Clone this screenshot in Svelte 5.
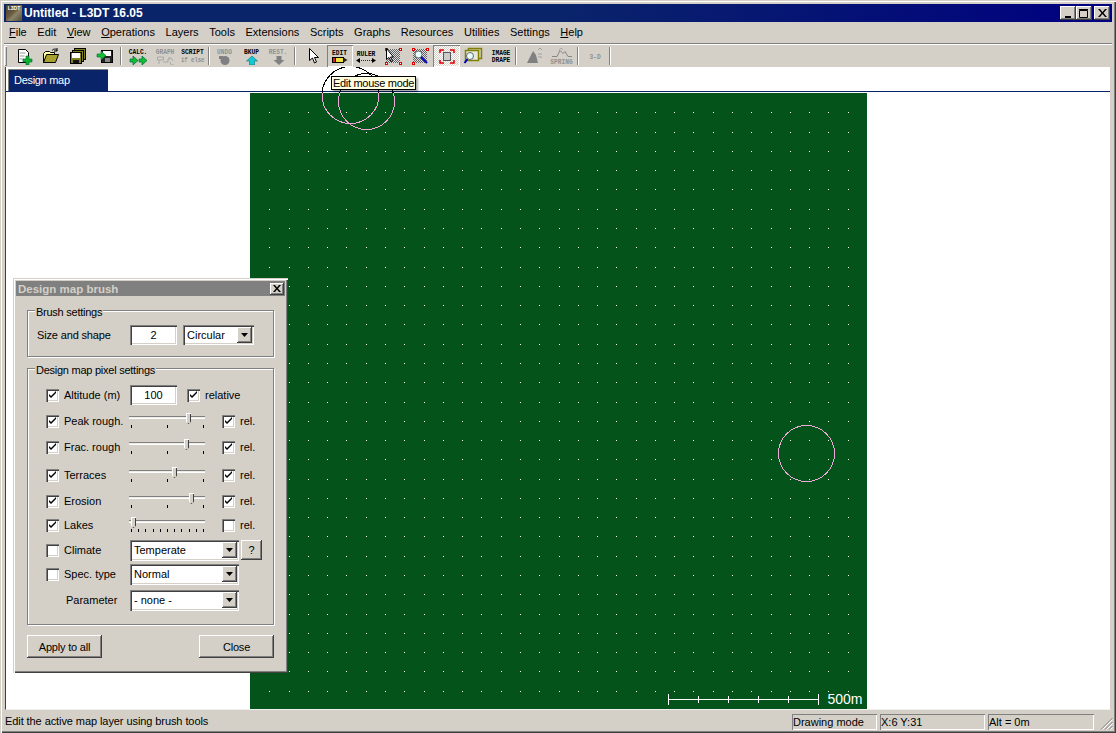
<script>
  const menus = [
    { u: 'F', rest: 'ile' }, { u: '', rest: 'Edit' }, { u: 'V', rest: 'iew' },
    { u: 'O', rest: 'perations' }, { u: '', rest: 'Layers' }, { u: '', rest: 'Tools' },
    { u: '', rest: 'Extensions' }, { u: '', rest: 'Scripts' }, { u: '', rest: 'Graphs' },
    { u: '', rest: 'Resources' }, { u: '', rest: 'Utilities' }, { u: '', rest: 'Settings' },
    { u: 'H', rest: 'elp' }
  ];

  // brush rows, gap = space above the row
  const sliders = [
    { label: 'Peak rough.', on: true, pos: 57, ticks: 3, rel: true, gap: 4 },
    { label: 'Frac. rough', on: true, pos: 55, ticks: 3, rel: true, gap: 4 },
    { label: 'Terraces', on: true, pos: 43, ticks: 3, rel: true, gap: 6 },
    { label: 'Erosion', on: true, pos: 60, ticks: 3, rel: true, gap: 4 },
    { label: 'Lakes', on: true, pos: 2, ticks: 11, rel: false, gap: 2 }
  ];

  const cell = 617 / 32;
  const dots = [];
  for (let i = 1; i < 32; i++) dots.push(Math.round(i * cell));

  const scaleTicks = [30, 60, 90, 120];
</script>

{#snippet check(on)}
  <span class="check sunken">
    {#if on}
      <svg width="9" height="9" viewBox="0 0 9 9"><path d="M1 3v2l2 2 5-5V0L3 5z" fill="#000" /></svg>
    {/if}
  </span>
{/snippet}

{#snippet combo(text, cls)}
  <div class="combo sunken {cls}">
    <span class="combo-text">{text}</span>
    <span class="combo-btn raised"><svg width="7" height="4" viewBox="0 0 7 4"><path d="M0 0h7L3.500 4z" fill="#000" /></svg></span>
  </div>
{/snippet}

{#snippet tbtext(a, b, grey)}
  <span class="tb-text" class:grey><span>{a}</span>{#if b}<span>{b}</span>{/if}</span>
{/snippet}

<div class="window">
  <div class="titlebar">
    <div class="app-icon"><span>L3DT</span></div>
    <div class="title-text">Untitled - L3DT 16.05</div>
    <div class="caption">
      <button class="cap raised" aria-label="Minimize"><svg width="9" height="9"><rect x="1" y="7" width="6" height="2" fill="#000" /></svg></button>
      <button class="cap raised" aria-label="Maximize"><svg width="10" height="9"><path d="M0.500 1.500h8v7h-8zM0 0.500h9" fill="none" stroke="#000" /></svg></button>
      <button class="cap raised close" aria-label="Close"><svg width="9" height="8"><path d="M0 0l2 0 2.500 3L7 0h2L5.500 4 9 8H7L4.500 5 2 8H0l3.500-4z" fill="#000" /></svg></button>
    </div>
  </div>

  <div class="menubar">
    {#each menus as m}
      <span class="menu"><u>{m.u}</u>{m.rest}</span>
    {/each}
  </div>

  <div class="toolbar">
    <div class="handle"></div>
    <div class="tb">
      <svg width="18" height="18" viewBox="0 0 18 18"><path d="M3.500 2.500h7l3 3v10h-10z" fill="#fff" stroke="#000" /><path d="M4.500 6h6M4.500 9h5M4.500 12h4" stroke="#999" /><path d="M11 9h3v3h3v3h-3v3h-3v-3H8v-3h3z" fill="#10b030" stroke="#063" stroke-width=".6" /></svg>
    </div>
    <div class="tb">
      <svg width="20" height="18" viewBox="0 0 20 18"><path d="M2.500 15.500v-9l2-2h4l1 1h4v2h-7l-4 8z" fill="#ffffa0" stroke="#000" /><path d="M2.500 15.500l3-8h12l-3 8z" fill="#a8a030" stroke="#000" /><path d="M11 3.500c2-2 4-2 5 0M16 1v3h-3" fill="none" stroke="#000" /></svg>
    </div>
    <div class="tb">
      <svg width="18" height="18" viewBox="0 0 18 18"><rect x="5.500" y="1.500" width="11" height="11" fill="#808020" stroke="#000" /><rect x="3.500" y="3.500" width="11" height="11" fill="#808020" stroke="#000" /><rect x="1.500" y="5.500" width="11" height="11" fill="#808020" stroke="#000" /><rect x="3" y="6" width="8" height="5" fill="#fff" /><rect x="4" y="13" width="6" height="3" fill="#111" /></svg>
    </div>
    <div class="tb">
      <svg width="18" height="18" viewBox="0 0 18 18"><rect x="5.500" y="3.500" width="11" height="12" fill="#222" stroke="#000" /><rect x="7" y="4" width="8" height="5" fill="#fff" /><rect x="9" y="11" width="5" height="4" fill="#888" /><path d="M1 7h4V4l5 4.500L5 13v-3H1z" fill="#10c030" stroke="#063" stroke-width=".6" /></svg>
    </div>
    <div class="sep s1"></div>
    <div class="tb col">
      {@render tbtext('CALC.')}
      <svg width="20" height="9" viewBox="0 0 20 9"><path d="M1 3h3V0l5 4.500L4 9V6H1zM10 3h3V0l5 4.500L13 9V6h-3z" fill="#10c030" stroke="#064" stroke-width=".7" /></svg>
    </div>
    <div class="tb col">
      {@render tbtext('GRAPH', '', true)}
      <svg width="20" height="9" viewBox="0 0 20 9"><path d="M1.500 1h6v3h-6zM3 4v4M7 6h5v-3h2M12 2h3l2 3M14 6l1 3h3" fill="none" stroke="#a8a8a8" /></svg>
    </div>
    <div class="tb col">
      {@render tbtext('SCRIPT')}
      <span class="ifelse">if else</span>
    </div>
    <div class="sep s2"></div>
    <div class="tb col">
      {@render tbtext('UNDO', '', true)}
      <svg width="12" height="9" viewBox="0 0 12 9"><circle cx="6" cy="4.500" r="4.500" fill="#808080" /><path d="M0 0h4v3H0z" fill="#808080" /></svg>
    </div>
    <div class="tb col">
      {@render tbtext('BKUP')}
      <svg width="12" height="9" viewBox="0 0 12 9"><path d="M6 0l5.500 5H8.500v4h-5V5H.5z" fill="#10c8d8" stroke="#066" stroke-width=".5" /></svg>
    </div>
    <div class="tb col">
      {@render tbtext('REST.', '', true)}
      <svg width="12" height="9" viewBox="0 0 12 9"><path d="M6 9L.5 4h3V0h5v4h3z" fill="#808080" /></svg>
    </div>
    <div class="sep s3"></div>
    <div class="tb">
      <svg width="14" height="18" viewBox="0 0 14 18"><path d="M2.500 1.500v12l3-2.500 2 5 2-1-2-4.500h4z" fill="#fff" stroke="#000" /></svg>
    </div>
    <div class="tb col pressed">
      {@render tbtext('EDIT')}
      <svg width="16" height="7" viewBox="0 0 16 7"><rect x="0.500" y="0.500" width="3" height="5" fill="#e02020" stroke="#000" /><rect x="3.500" y="0.500" width="8" height="5" fill="#f0e040" stroke="#000" /><path d="M11.500 .5l4 2.500-4 2.500z" fill="#222" /></svg>
    </div>
    <div class="tb col narrow">
      {@render tbtext('RULER')}
      <svg width="20" height="5" viewBox="0 0 20 5"><path d="M3 2.500h14" stroke="#800" stroke-dasharray="1 1" /><path d="M0 2.500L4 0v5zM20 2.500L16 0v5z" fill="#000" /></svg>
    </div>
    <div class="tb">
      <svg width="18" height="18" viewBox="0 0 18 18" shape-rendering="crispEdges">
        <defs><pattern id="dither" width="2" height="2" patternUnits="userSpaceOnUse"><rect width="2" height="2" fill="#e0e0e0" /><rect width="1" height="1" fill="#606060" /><rect x="1" y="1" width="1" height="1" fill="#606060" /></pattern></defs>
        <rect x="2" y="2" width="14" height="14" fill="url(#dither)" />
        <path d="M1 1h2v2H1zM15 1h2v2h-2zM1 15h2v2H1zM15 15h2v2h-2z" fill="#fff" stroke="#e00000" />
        <path d="M2.500 1.500v11l2.500-2 2 4 1.500-.7-2-3.800h3z" fill="#fff" stroke="#000" shape-rendering="auto" />
      </svg>
    </div>
    <div class="tb">
      <svg width="18" height="18" viewBox="0 0 18 18" shape-rendering="crispEdges">
        <rect x="2" y="2" width="14" height="14" fill="url(#dither)" />
        <path d="M1 1h2v2H1zM15 1h2v2h-2zM1 15h2v2H1z" fill="#fff" stroke="#e00000" />
        <circle cx="7.500" cy="7.500" r="3.500" fill="#e8ffff" stroke="#666" shape-rendering="auto" />
        <path d="M10 10l6 6" stroke="#0000c0" stroke-width="2" shape-rendering="auto" />
      </svg>
    </div>
    <div class="tb checked">
      <svg width="16" height="15" viewBox="0 0 16 15"><path d="M1 4V1h4M11 1h4v3M15 11v3h-4M5 14H1v-3" fill="none" stroke="#e00000" stroke-width="1.500" /><rect x="4.500" y="3.500" width="7" height="8" fill="#ccc" stroke="#555" /></svg>
    </div>
    <div class="tb narrow">
      <svg width="20" height="18" viewBox="0 0 20 18"><rect x="5.500" y="1.500" width="13" height="10" fill="#d4d0c8" stroke="#808000" stroke-width="1.500" /><rect x="2.500" y="3.500" width="13" height="10" fill="#e8e8e0" stroke="#808000" stroke-width="1.500" /><circle cx="7" cy="9" r="3.500" fill="#e8ffff" stroke="#666" /><path d="M4.500 12l-3 4" stroke="#0000c0" stroke-width="2" /></svg>
    </div>
    <div class="tb col drape">
      {@render tbtext('IMAGE', 'DRAPE')}
    </div>
    <div class="sep s4"></div>
    <div class="tb">
      <svg width="18" height="18" viewBox="0 0 18 18"><path d="M1 16L7 4l3 4 2 8z" fill="#808080" /><path d="M12 3l2-2 2 2M12 7h4M12 10h4" fill="none" stroke="#a0a0a0" /></svg>
    </div>
    <div class="tb col">
      <svg width="22" height="9" viewBox="0 0 22 9"><path d="M1 8.500h5l3-6 3 3 2-2 3 5h4" fill="none" stroke="#888" /><path d="M8 2l2-2 2 2" fill="none" stroke="#aaa" /></svg>
      {@render tbtext('SPRING', '', true)}
    </div>
    <div class="sep s5"></div>
    <div class="tb">{@render tbtext('3-D', '', true)}</div>
    <div class="sep s6"></div>
  </div>

  <div class="client">
    <div class="tabstrip">
      <div class="tab">Design map</div>
    </div>
    <div class="canvas">
      <div class="map">
        <svg class="dots" width="617" height="617" shape-rendering="crispEdges">
          {#each dots as y}
            {#each dots as x}
              <rect {x} {y} width="1" height="1" fill="#fff" />
            {/each}
          {/each}
        </svg>
        <div class="scale">
          <svg width="153" height="11" shape-rendering="crispEdges">
            <path d="M0 5.500h151M0.500 0v11M150.500 0v11" stroke="#fff" fill="none" />
            {#each scaleTicks as t}
              <path d="M{t + 0.5} 2v7" stroke="#fff" />
            {/each}
          </svg>
          <span>500m</span>
        </div>
      </div>
    </div>
  </div>

  <div class="statusbar">
    <div class="status-msg">Edit the active map layer using brush tools</div>
    <div class="panel p1">Drawing mode</div>
    <div class="panel p2">X:6 Y:31</div>
    <div class="panel p3">Alt = 0m</div>
    <svg class="grip" width="13" height="13" viewBox="0 0 13 13"><path d="M12.500 1L1 12.500M12.500 5L5 12.500M12.500 9L9 12.500" stroke="#808080" fill="none" /><path d="M12.500 2.500L2.500 12.500M12.500 6.500L6.500 12.500M12.500 10.500L10.500 12.500" stroke="#fff" fill="none" /></svg>
  </div>

  <!-- brush cursor circles, XOR look: black on white, pink on the map -->
  <svg class="cursors" width="1116" height="733">
    <defs>
      <clipPath id="over-white"><rect x="6" y="67" width="1104" height="26" /></clipPath>
      <clipPath id="over-map"><rect x="250" y="93" width="617" height="617" /></clipPath>
    </defs>
    <g fill="none" stroke="#000" clip-path="url(#over-white)">
      <circle cx="350.500" cy="95" r="28.500" />
      <circle cx="366.500" cy="101.500" r="28" />
    </g>
    <g fill="none" stroke="#f0a8d8" clip-path="url(#over-map)">
      <circle cx="350.500" cy="95" r="28.500" />
      <circle cx="366.500" cy="101.500" r="28" />
      <circle cx="806.500" cy="453.500" r="28" />
    </g>
  </svg>

  <div class="tooltip">Edit mouse mode</div>

  <div class="dialog">
    <div class="dlg-title">
      <span>Design map brush</span>
      <button class="dlg-close raised" aria-label="Close"><svg width="8" height="7"><path d="M0 0h2l2 2.500L6 0h2L5 3.500 8 7H6L4 4.500 2 7H0l3-3.500z" fill="#000" /></svg></button>
    </div>

    <div class="group g1">
      <div class="legend">Brush settings</div>
      <div class="size-row">
        <span class="size-label">Size and shape</span>
        <div class="input sunken">2</div>
        {@render combo('Circular', 'shape')}
      </div>
    </div>

    <div class="group g2">
      <div class="legend">Design map pixel settings</div>

      <div class="row first">
        {@render check(true)}
        <span class="label">Altitude (m)</span>
        <div class="input sunken">100</div>
        <span class="alt-rel">{@render check(true)}</span>
        <span class="alt-rel-text">relative</span>
      </div>

      {#each sliders as s}
        <div class="row" style:margin-top="{s.gap}px">
          {@render check(s.on)}
          <span class="label">{s.label}</span>
          <div class="slider">
            <div class="track"></div>
            {#each Array(s.ticks) as _, i}
              <span class="tick" style:left="{2 + (72 * i) / (s.ticks - 1)}px"></span>
            {/each}
            <div class="thumb" style:left="{s.pos}px"></div>
          </div>
          {@render check(s.rel)}
          <span class="rel-text">rel.</span>
        </div>
      {/each}

      <div class="row" style:margin-top="3px">
        {@render check(false)}
        <span class="label">Climate</span>
        {@render combo('Temperate', 'wide')}
        <button class="help raised">?</button>
      </div>
      <div class="row" style:margin-top="2px">
        {@render check(false)}
        <span class="label">Spec. type</span>
        {@render combo('Normal', 'wide')}
      </div>
      <div class="row" style:margin-top="4px">
        <span class="param">Parameter</span>
        {@render combo('- none -', 'wide')}
      </div>
    </div>

    <div class="dlg-buttons">
      <button class="btn raised">Apply to all</button>
      <button class="btn raised">Close</button>
    </div>
  </div>
</div>

<style>
  :global(body) {
    background: #d4d0c8;
  }
  .window {
    position: relative;
    width: 1116px;
    height: 733px;
    box-sizing: border-box;
    display: flex;
    flex-direction: column;
    overflow: hidden;
    background: #d4d0c8;
    font-family: "Liberation Sans", Arial, sans-serif;
    font-size: 11px;
    color: #000;
    box-shadow: inset 1px 1px 0 #d4d0c8, inset 2px 2px 0 #fff, inset -1px -1px 0 #404040, inset -2px -2px 0 #808080;
  }
  .raised {
    box-shadow: inset -1px -1px 0 #404040, inset 1px 1px 0 #fff, inset -2px -2px 0 #808080;
    background: #d4d0c8;
    border: none;
    padding: 0;
    font: inherit;
    color: #000;
  }
  .sunken {
    box-sizing: border-box;
    background: #fff;
    box-shadow: inset 1px 1px 0 #808080, inset 2px 2px 0 #404040, inset -1px -1px 0 #fff, inset -2px -2px 0 #d4d0c8;
  }

  .titlebar {
    margin: 4px 4px 0;
    height: 18px;
    display: flex;
    align-items: center;
    background: linear-gradient(90deg, #0a246a, #0a246a 50%, #000080);
    flex: none;
  }
  .app-icon {
    width: 16px;
    height: 16px;
    margin-left: 2px;
    background: linear-gradient(135deg, #3c3c36, #6c5c40 45%, #8c8468 60%, #4c4c38);
    overflow: hidden;
  }
  .app-icon span {
    display: block;
    font-size: 5px;
    line-height: 6px;
    color: #fff;
    font-weight: bold;
    text-align: center;
  }
  .title-text {
    margin-left: 2px;
    font-weight: bold;
    font-size: 12px;
    color: #fff;
  }
  .caption {
    margin-left: auto;
    margin-right: 2px;
    display: flex;
  }
  .cap {
    width: 16px;
    height: 14px;
    display: flex;
    align-items: center;
    justify-content: center;
  }
  .cap.close {
    margin-left: 2px;
  }

  .menubar {
    height: 19px;
    padding-left: 9px;
    display: flex;
    align-items: center;
    gap: 10.600px;
    font-size: 11px;
    flex: none;
    margin-top: 1px;
  }
  .menu {
    position: relative;
    top: -1px;
  }
  .menu u {
    text-decoration: underline;
  }

  .toolbar {
    flex: none;
    height: 24px;
    box-sizing: border-box;
    margin: 1px 4px 0;
    padding-top: 1px;
    border-top: 1px solid #808080;
    box-shadow: inset 0 1px 0 #fff;
    display: flex;
    align-items: stretch;
  }
  .handle {
    width: 3px;
    margin: 1px 3px 1px 0;
    box-shadow: inset 1px 1px 0 #fff, inset -1px -1px 0 #808080;
  }
  .tb {
    width: 27px;
    flex: none;
    box-sizing: border-box;
    display: flex;
    align-items: center;
    justify-content: center;
  }
  .tb.col {
    flex-direction: column;
    gap: 1px;
  }
  .tb.narrow {
    width: 26px;
  }
  .tb.drape {
    margin-left: 2px;
  }
  .tb.pressed {
    width: 26px;
    box-shadow: inset 1px 1px 0 #808080, inset -1px -1px 0 #fff;
  }
  .tb.checked {
    box-shadow: inset 1px 1px 0 #808080, inset -1px -1px 0 #fff;
    background: repeating-conic-gradient(#fff 0 25%, #d4d0c8 0 50%) 0 0 / 2px 2px;
  }
  .tb-text {
    display: flex;
    flex-direction: column;
    align-items: center;
    font-family: "Liberation Mono", monospace;
    font-size: 8px;
    font-weight: bold;
    line-height: 7px;
    transform: scaleX(.78);
    white-space: nowrap;
  }
  .tb-text.grey {
    color: #909090;
  }
  .ifelse {
    font-family: "Liberation Mono", monospace;
    font-size: 7px;
    line-height: 8px;
    font-weight: bold;
    color: #909090;
    transform: scaleX(.8);
    white-space: nowrap;
  }
  .sep {
    width: 2px;
    flex: none;
    margin-top: 2px;
    margin-bottom: 2px;
    box-shadow: inset 1px 0 0 #808080, inset -1px 0 0 #fff;
  }
  .s1 { margin-left: 2px; margin-right: 3px; }
  .s2 { margin-left: 2px; margin-right: 1px; }
  .s3 { margin-left: 2px; margin-right: 4px; }
  .s4 { margin-left: 0; margin-right: 4px; }
  .s5 { margin-left: 2px; margin-right: 3px; }
  .s6 { margin-left: 0; }

  .client {
    flex: 1;
    margin: 0 5px 0 5px;
    min-height: 0;
    display: flex;
    flex-direction: column;
    background: #fff;
    border-left: 1px solid #404040;
    border-right: 1px solid #d4d0c8;
    border-bottom: 1px solid #f0f0f0;
  }
  .tabstrip {
    flex: none;
    height: 25px;
    box-sizing: border-box;
    padding: 2px 0 0 2px;
    border-bottom: 1px solid #0a246a;
  }
  .tab {
    width: 100px;
    height: 22px;
    box-sizing: border-box;
    background: #0a246a;
    color: #fff;
    font-size: 11px;
    letter-spacing: -.3px;
    line-height: 22px;
    padding-left: 6px;
    box-shadow: inset 1px 1px 0 #808080;
  }
  .canvas {
    flex: 1;
    min-height: 0;
    display: flex;
    justify-content: center;
    padding-top: 1px;
  }
  .map {
    position: relative;
    width: 617px;
    background: #03531b;
    overflow: hidden;
  }
  .dots {
    display: block;
  }
  .scale {
    position: absolute;
    left: 418px;
    bottom: 4px;
    display: flex;
    align-items: center;
    gap: 7px;
    color: #fff;
    font-size: 14px;
    line-height: 11px;
  }
  .scale svg {
    display: block;
  }

  .statusbar {
    flex: none;
    height: 23px;
    padding: 0 4px 0 5px;
    box-sizing: border-box;
    display: flex;
    align-items: center;
    position: relative;
  }
  .status-msg {
    flex: 1;
    letter-spacing: -.08px;
    margin-bottom: 2px;
  }
  .panel {
    height: 16px;
    box-sizing: border-box;
    box-shadow: inset 1px 1px 0 #808080, inset -1px -1px 0 #fff;
    padding-left: 1px;
    line-height: 16px;
  }
  .p1 { width: 85px; margin-right: 3px; }
  .p2 { width: 105px; margin-right: 3px; }
  .p3 { width: 106px; margin-right: 18px; }
  .grip {
    position: absolute;
    right: 3px;
    bottom: 3px;
  }

  .cursors {
    position: absolute;
    left: 0;
    top: 0;
    shape-rendering: crispEdges;
    pointer-events: none;
  }

  .tooltip {
    position: absolute;
    left: 331px;
    top: 76px;
    width: 85px;
    height: 14px;
    box-sizing: border-box;
    background: #ffffe1;
    border: 1px solid #000;
    line-height: 13px;
    letter-spacing: -.3px;
    padding-left: 1px;
    white-space: nowrap;
    box-shadow: 2px 2px 2px rgba(0, 0, 0, .35);
  }

  .dialog {
    position: absolute;
    left: 13px;
    top: 278px;
    width: 275px;
    height: 395px;
    box-sizing: border-box;
    padding: 3px;
    background: #d4d0c8;
    box-shadow: inset 1px 1px 0 #d4d0c8, inset 2px 2px 0 #fff, inset -1px -1px 0 #404040, inset -2px -2px 0 #808080;
  }
  .dlg-title {
    height: 15px;
    background: #808080;
    color: #d4d0c8;
    font-weight: bold;
    font-size: 11.500px;
    line-height: 15px;
    padding-left: 2px;
    display: flex;
    align-items: center;
    justify-content: space-between;
  }
  .dlg-title span {
    margin-top: 2px;
  }
  .dlg-close {
    width: 14px;
    height: 12px;
    margin-right: 1px;
    display: flex;
    align-items: center;
    justify-content: center;
  }
  .group {
    box-sizing: border-box;
    width: 247px;
    margin-left: 11px;
    border: 1px solid #808080;
    box-shadow: 1px 1px 0 #fff, inset 1px 1px 0 #fff;
  }
  .g1 {
    margin-top: 14px;
    height: 47px;
  }
  .g2 {
    margin-top: 11px;
    height: 257px;
  }
  .legend {
    display: table;
    height: 13px;
    line-height: 13px;
    margin: -5px 0 0 7px;
    padding: 0 1px;
    background: #d4d0c8;
    letter-spacing: -.25px;
  }
  .size-row {
    display: flex;
    align-items: center;
    margin-top: 6px;
    padding-left: 9px;
  }
  .size-label {
    width: 93px;
    letter-spacing: -.15px;
  }
  .input {
    width: 47px;
    height: 20px;
    line-height: 20px;
    text-align: center;
    flex: none;
  }
  .combo {
    height: 21px;
    display: flex;
    align-items: center;
    justify-content: space-between;
    padding: 2px;
    flex: none;
  }
  .combo-text {
    padding-left: 2px;
  }
  .combo-btn {
    width: 15px;
    height: 16px;
    display: flex;
    align-items: center;
    justify-content: center;
  }
  .combo.shape {
    width: 71px;
    margin-left: 6px;
    height: 20px;
  }
  .combo.wide {
    width: 109px;
  }
  .row {
    display: flex;
    align-items: center;
    height: 22px;
    padding-left: 18px;
  }
  .row.first {
    margin-top: 7px;
  }
  .check {
    width: 13px;
    height: 13px;
    flex: none;
    display: flex;
    align-items: center;
    justify-content: center;
  }
  .label {
    margin-left: 5px;
    width: 66px;
    flex: none;
    white-space: nowrap;
  }
  .param {
    width: 84px;
    padding-left: 20px;
    box-sizing: border-box;
  }
  .alt-rel {
    margin-left: 10px;
    display: flex;
  }
  .alt-rel-text {
    margin-left: 5px;
  }
  .slider {
    position: relative;
    width: 76px;
    height: 22px;
    margin: 0 17px 0 -1px;
    flex: none;
  }
  .track {
    position: absolute;
    left: 0;
    right: 0;
    top: 6px;
    height: 3px;
    box-sizing: border-box;
    background: #ecebe6;
    border-top: 1px solid #808080;
    border-bottom: 1px solid #fff;
  }
  .tick {
    position: absolute;
    top: 15px;
    width: 1px;
    height: 3px;
    background: #000;
  }
  .thumb {
    position: absolute;
    top: 3px;
    width: 5px;
    height: 11px;
    background: #d4d0c8;
    box-shadow: inset 1px 1px 0 #fff, inset -1px -1px 0 #404040;
    clip-path: polygon(0 0, 100% 0, 100% 80%, 50% 100%, 0 80%);
  }
  .rel-text {
    margin-left: 5px;
  }
  .help {
    width: 21px;
    height: 20px;
    margin-left: 2px;
    margin-top: -1px;
  }
  .dlg-buttons {
    display: flex;
    justify-content: space-between;
    margin: 10px 11px 0;
  }
  .btn {
    width: 75px;
    height: 23px;
    letter-spacing: -.2px;
  }
</style>
